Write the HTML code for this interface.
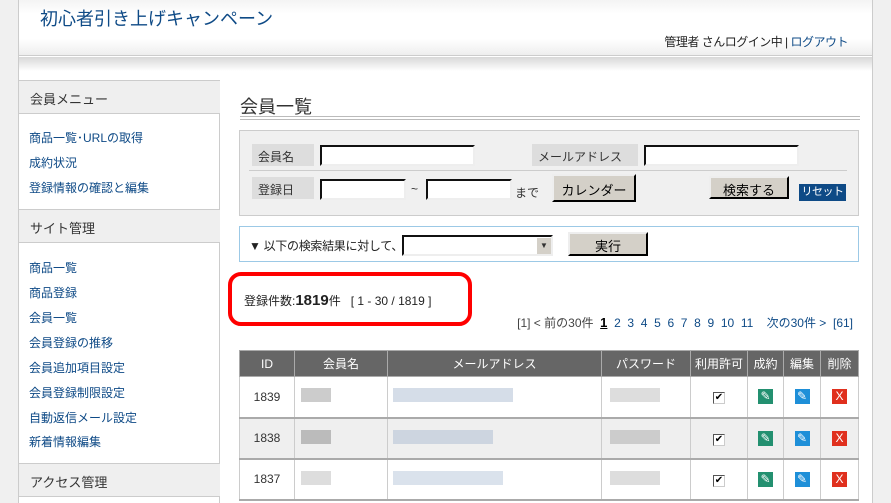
<!DOCTYPE html>
<html><head><meta charset="utf-8"><style>
*{margin:0;padding:0;box-sizing:border-box}
body{width:891px;height:503px;overflow:hidden;background:#f0f0f0;font-family:"Liberation Sans","Noto Sans CJK JP",sans-serif;font-size:12px;color:#333;position:relative}
.a{position:absolute}
#wrap{left:18px;top:0;width:855px;height:503px;background:#fff;border-left:1px solid #ccc;border-right:1px solid #ccc}
#hdr{left:19px;top:0;width:853px;height:56px;background:linear-gradient(#f4f4f4,#fff 25%,#fff 70%,#eee);border-bottom:1px solid #ccc}
#shadow{left:19px;top:57px;width:853px;height:14px;background:linear-gradient(#d8d8d8,#fff)}
.sh{left:19px;width:201px;height:34px;background:#efefef;border-top:1px solid #ccc;border-bottom:1px solid #ccc;font-size:13px;color:#333;padding:8px 0 0 11px}
.lk{left:29px;color:#0e4a86;font-size:12px}
.lbl{background:#ddd;color:#333;font-size:12px;padding:4px 6px;height:22px}
.inp{background:#fff;border:2px inset #eee;border-top-color:#666;border-left-color:#666;height:21px}
.btn{background:#d4d0c8;border:2px outset #eee;border-right-color:#555;border-bottom-color:#555;font-size:13px;text-align:center;color:#000}
table{border-collapse:collapse;position:absolute;left:239px;top:350px;width:620px}
th{background:#666;color:#fff;font-weight:normal;height:26px;border:1px solid #aaa;font-size:12px}
td{height:41px;border-bottom:2px solid #aaa;border-left:1px solid #ccc;border-right:1px solid #ccc;text-align:center}
tr.g td{background:#efefef}
.ic{display:inline-block;width:15px;height:15px;color:#fff;font-size:12px;line-height:15px;text-align:center}
.cb{display:inline-block;width:12px;height:12px;border:1px solid #555;border-right-color:#ccc;border-bottom-color:#ccc;font-size:10px;line-height:10px;background:#fff;color:#000}
.bl{display:inline-block;height:14px;background:#ddd}
</style></head><body>
<div class="a" id="wrap"></div>
<div class="a" id="hdr"></div>
<div class="a" id="shadow"></div>
<div class="a" style="left:40px;top:5px;font-size:18px;color:#0e4a86">初心者引き上げキャンペーン</div>
<div class="a" style="right:43px;top:33px;font-size:12px;color:#222;letter-spacing:-0.5px">管理者 さんログイン中 | <span style="color:#0e4a86">ログアウト</span></div>
<div class="a" style="left:219px;top:80px;width:1px;height:423px;background:#ccc"></div>
<div class="a sh" style="top:80px">会員メニュー</div>
<div class="a lk" style="top:129px">商品一覧･URLの取得</div>
<div class="a lk" style="top:154px">成約状況</div>
<div class="a lk" style="top:179px">登録情報の確認と編集</div>
<div class="a sh" style="top:209px">サイト管理</div>
<div class="a lk" style="top:259px">商品一覧</div>
<div class="a lk" style="top:284px">商品登録</div>
<div class="a lk" style="top:309px">会員一覧</div>
<div class="a lk" style="top:334px">会員登録の推移</div>
<div class="a lk" style="top:359px">会員追加項目設定</div>
<div class="a lk" style="top:384px">会員登録制限設定</div>
<div class="a lk" style="top:409px">自動返信メール設定</div>
<div class="a lk" style="top:433px">新着情報編集</div>
<div class="a sh" style="top:463px">アクセス管理</div>

<div class="a" style="left:240px;top:93px;font-size:18px;color:#333">会員一覧</div>
<div class="a" style="left:240px;top:116px;width:620px;height:4px;border-top:1px solid #bbb;border-bottom:1px solid #bbb"></div>

<div class="a" style="left:239px;top:130px;width:620px;height:86px;background:#f0f0f0;border:1px solid #ccc"></div>
<div class="a lbl" style="left:252px;top:144px;width:62px">会員名</div>
<div class="a inp" style="left:320px;top:145px;width:155px"></div>
<div class="a lbl" style="left:532px;top:144px;width:106px">メールアドレス</div>
<div class="a inp" style="left:644px;top:145px;width:155px"></div>
<div class="a" style="left:249px;top:170px;width:598px;height:1px;background:#ccc"></div>
<div class="a lbl" style="left:252px;top:177px;width:62px">登録日</div>
<div class="a inp" style="left:320px;top:179px;width:86px"></div>
<div class="a" style="left:411px;top:182px">~</div>
<div class="a inp" style="left:426px;top:179px;width:86px"></div>
<div class="a" style="left:515px;top:184px">まで</div>
<div class="a btn" style="left:552px;top:174px;width:84px;height:28px;padding-top:4px">カレンダー</div>
<div class="a btn" style="left:709px;top:176px;width:80px;height:23px;padding-top:2px">検索する</div>
<div class="a" style="left:799px;top:184px;width:47px;height:17px;background:#0e4a86;color:#fff;font-size:11px;text-align:center;line-height:17px;white-space:nowrap;letter-spacing:-0.5px">リセット</div>

<div class="a" style="left:239px;top:226px;width:620px;height:36px;border:1px solid #9cc9e6"></div>
<div class="a" style="left:249px;top:237px;font-size:12px;color:#222;letter-spacing:-0.3px">▼ 以下の検索結果に対して、</div>
<div class="a inp" style="left:402px;top:235px;width:151px;height:21px"></div>
<div class="a" style="left:537px;top:238px;width:14px;height:16px;background:#d4d0c8;font-size:8px;text-align:center;line-height:16px">▼</div>
<div class="a btn" style="left:568px;top:232px;width:80px;height:24px;padding-top:2px">実行</div>

<div class="a" style="left:228px;top:272px;width:244px;height:54px;border:4px solid #f00;border-radius:13px"></div>
<div class="a" style="left:244px;top:292px;font-size:12px;color:#222">登録件数:<b style="font-size:15px">1819</b>件 &nbsp; [ 1 - 30 / 1819 ]</div>
<div class="a" style="right:38px;top:314px;font-size:12px;color:#444;white-space:nowrap">[1] &lt; 前の30件 &nbsp;<b style="color:#000;text-decoration:underline;font-size:13px">1</b>&nbsp; <span style="color:#0e4a86">2 &nbsp;3 &nbsp;4 &nbsp;5 &nbsp;6 &nbsp;7 &nbsp;8 &nbsp;9 &nbsp;10 &nbsp;11 &nbsp;&nbsp; 次の30件 &gt; &nbsp;[61]</span></div>

<table>
<tr><th style="width:55px">ID</th><th style="width:93px">会員名</th><th style="width:214px">メールアドレス</th><th style="width:89px">パスワード</th><th style="width:57px">利用許可</th><th style="width:36px">成約</th><th style="width:37px">編集</th><th>削除</th></tr>
<tr><td>1839</td><td style="text-align:left;padding-left:6px"><span class="bl" style="width:30px;background:#ccc"></span></td><td style="text-align:left;padding-left:5px"><span class="bl" style="width:120px;background:#d5dde8"></span></td><td style="text-align:left;padding-left:8px"><span class="bl" style="width:50px"></span></td><td><span class="cb">✔</span></td><td><span class="ic" style="background:#239070">✎</span></td><td><span class="ic" style="background:#1e8fd8">✎</span></td><td><span class="ic" style="background:#e0301e">X</span></td></tr>
<tr class="g"><td>1838</td><td style="text-align:left;padding-left:6px"><span class="bl" style="width:30px;background:#bbb"></span></td><td style="text-align:left;padding-left:5px"><span class="bl" style="width:100px;background:#cdd5e0"></span></td><td style="text-align:left;padding-left:8px"><span class="bl" style="width:50px;background:#ccc"></span></td><td><span class="cb">✔</span></td><td><span class="ic" style="background:#239070">✎</span></td><td><span class="ic" style="background:#1e8fd8">✎</span></td><td><span class="ic" style="background:#e0301e">X</span></td></tr>
<tr><td>1837</td><td style="text-align:left;padding-left:6px"><span class="bl" style="width:30px"></span></td><td style="text-align:left;padding-left:5px"><span class="bl" style="width:110px;background:#dae2ec"></span></td><td style="text-align:left;padding-left:8px"><span class="bl" style="width:50px"></span></td><td><span class="cb">✔</span></td><td><span class="ic" style="background:#239070">✎</span></td><td><span class="ic" style="background:#1e8fd8">✎</span></td><td><span class="ic" style="background:#e0301e">X</span></td></tr>
</table>
</body></html>
